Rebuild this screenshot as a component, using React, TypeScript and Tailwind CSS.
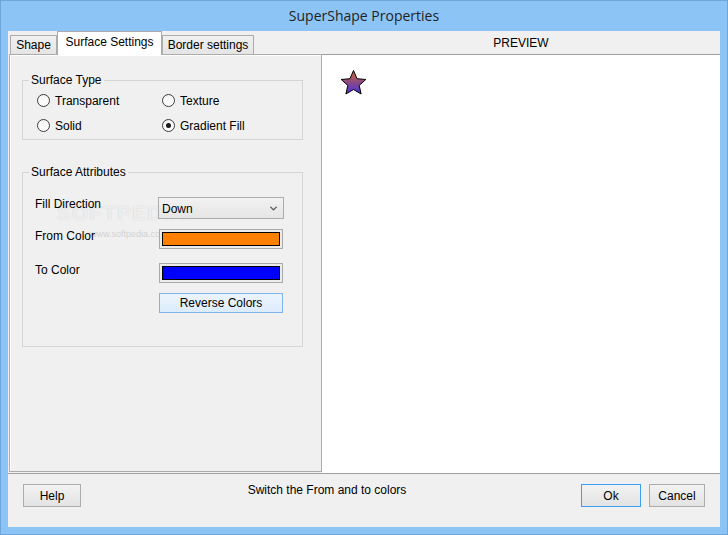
import { ChevronDown } from "lucide-react";

const ui = "font-['Liberation_Sans',Arial,sans-serif]";

function Radio({ label, checked }: { label: string; checked?: boolean }) {
  return (
    <div className="flex items-center gap-[5px] h-[13px]">
      <div className="w-[13px] h-[13px] rounded-full border border-[#3c3c3c] bg-gradient-to-b from-[#f4f4f4] to-white flex items-center justify-center">
        {checked && <div className="w-[5px] h-[5px] rounded-full bg-[#1a1a1a]" />}
      </div>
      <span className="text-[12px] leading-[14px] text-black">{label}</span>
    </div>
  );
}

function GroupBox({
  title,
  className,
  children,
}: {
  title: string;
  className?: string;
  children: React.ReactNode;
}) {
  return (
    <div className={"relative border border-[#d5d5d5] " + (className ?? "")}>
      <span className="absolute -top-[8px] left-[6px] px-[2px] bg-[#f0f0f0] text-[12px] leading-[14px] text-black">
        {title}
      </span>
      {children}
    </div>
  );
}

function Swatch({ color }: { color: string }) {
  return (
    <div className="ml-px w-[124px] h-[20px] border border-[#a9a9a9] bg-[#ececec] p-[2px] flex">
      <div className="flex-1 border border-black" style={{ background: color }} />
    </div>
  );
}

function Star() {
  return (
    <svg width="25" height="25" viewBox="0 0 25 25">
      <defs>
        <linearGradient id="sg" x1="0" y1="0" x2="0" y2="1">
          <stop offset="0" stopColor="#d2642a" />
          <stop offset="0.5" stopColor="#8c4a86" />
          <stop offset="1" stopColor="#4630dc" />
        </linearGradient>
      </defs>
      <polygon
        points="12.5,0.5 16,8.7 24.8,9.5 18.2,15.4 20.1,24 12.5,19.5 4.9,24 6.8,15.4 0.2,9.5 9,8.7"
        fill="url(#sg)"
        stroke="#000"
        strokeWidth="1"
      />
    </svg>
  );
}

function Button({ label, width, focused }: { label: string; width: string; focused?: boolean }) {
  return (
    <button
      className={
        "h-[23px] text-[12px] leading-[14px] text-black bg-gradient-to-b from-[#f2f2f2] to-[#e3e3e3] border " +
        width +
        (focused ? " border-[#3c9ef2]" : " border-[#acacac]")
      }
    >
      {label}
    </button>
  );
}

export default function App() {
  return (
    <div className={"w-[728px] h-[535px] bg-[#8cc4f6] shadow-[inset_0_0_0_1px_#6ea6db] flex flex-col " + ui}>
      <div className="h-[31px] flex items-center justify-center">
        <span className="font-['Open_Sans','Noto_Sans',sans-serif] text-[14px] text-[#1f1f1f] -mt-px">
          SuperShape Properties
        </span>
      </div>

      <div className="mx-2 h-[496px] bg-[#f0f0f0] flex flex-col">
        <div className="h-[442px] flex">
          {/* left: tabs */}
          <div className="w-[314px] flex flex-col">
            <div className="h-[23px] flex items-end pl-[2px]">
              <div className="w-[47px] h-[19px] border border-b-0 border-[#acacac] bg-gradient-to-b from-[#f0f0f0] to-[#e5e5e5] flex items-center justify-center text-[12px] leading-[14px]">
                Shape
              </div>
              <div className="relative z-10 -mb-px w-[105px] h-[24px] border border-b-0 border-[#acacac] bg-white flex justify-center pt-[3px] text-[12px] leading-[14px]">
                Surface Settings
              </div>
              <div className="w-[92px] h-[19px] border border-b-0 border-[#acacac] bg-gradient-to-b from-[#f0f0f0] to-[#e5e5e5] flex items-center justify-center text-[12px] leading-[14px]">
                Border settings
              </div>
            </div>
            <div className="relative ml-px w-[313px] h-[418px] border border-[#acacac] bg-[#f0f0f0] shadow-[inset_1px_1px_0_#fff] pl-[12px] pt-[25px]">
              {/* watermark, painted under the controls */}
              <div className="pointer-events-none absolute left-[47px] top-[142px] text-[21px] font-bold tracking-[1px] text-white/70 [text-shadow:0_0_1px_#c4c4c4]">
                SOFTPEDIA
              </div>
              <div className="pointer-events-none absolute left-[80px] top-[173px] text-[9px] text-[#d2d2d2]">
                www.softpedia.com
              </div>

              <GroupBox title="Surface Type" className="w-[281px] h-[60px] pt-[13px] pl-[14px]">
                <div className="grid grid-cols-[125px_1fr] gap-y-[12px]">
                  <Radio label="Transparent" />
                  <Radio label="Texture" />
                  <Radio label="Solid" />
                  <Radio label="Gradient Fill" checked />
                </div>
              </GroupBox>

              <GroupBox title="Surface Attributes" className="mt-[32px] w-[281px] h-[175px] pt-[24px] pl-[12px]">
                <div className="flex flex-col">
                  <div className="flex items-start">
                    <span className="w-[123px] text-[12px] leading-[14px]">Fill Direction</span>
                    <div className="w-[126px] h-[22px] border border-[#acacac] bg-gradient-to-b from-[#f2f2f2] to-[#e5e5e5] flex items-center justify-between pl-[3px] pr-[4px]">
                      <span className="text-[12px] leading-[14px] mt-px">Down</span>
                      <ChevronDown size={11} strokeWidth={3} className="text-[#555]" />
                    </div>
                  </div>
                  <div className="flex items-start mt-[10px]">
                    <span className="w-[123px] text-[12px] leading-[14px]">From Color</span>
                    <Swatch color="#ff8000" />
                  </div>
                  <div className="flex items-start mt-[14px]">
                    <span className="w-[123px] text-[12px] leading-[14px]">To Color</span>
                    <Swatch color="#0000ff" />
                  </div>
                  <div className="flex mt-[10px] pl-[124px]">
                    <button className="w-[124px] h-[20px] border border-[#7eb4ea] bg-gradient-to-b from-[#ecf5fd] to-[#dcecfc] text-[12px] leading-[14px] text-black">
                      Reverse Colors
                    </button>
                  </div>
                </div>
              </GroupBox>
            </div>
          </div>

          {/* right: preview */}
          <div className="flex-1 flex flex-col">
            <div className="h-[24px] border-b border-[#a0a0a0] flex items-center justify-center text-[12px] leading-[14px] text-black">
              PREVIEW
            </div>
            <div className="flex-1 bg-white pl-[19px] pt-[15px]">
              <Star />
            </div>
          </div>
        </div>

        <div className="h-px bg-[#a0a0a0]" />

        <div className="flex-1 flex items-start pl-[15px] pr-[15px] pt-[10px]">
          <Button label="Help" width="w-[58px]" />
          <div className="flex-1 text-center text-[12px] leading-[12px] pr-[8px]">
            Switch the From and to colors
          </div>
          <Button label="Ok" width="w-[60px]" focused />
          <div className="w-[8px]" />
          <Button label="Cancel" width="w-[56px]" />
        </div>
      </div>
    </div>
  );
}
